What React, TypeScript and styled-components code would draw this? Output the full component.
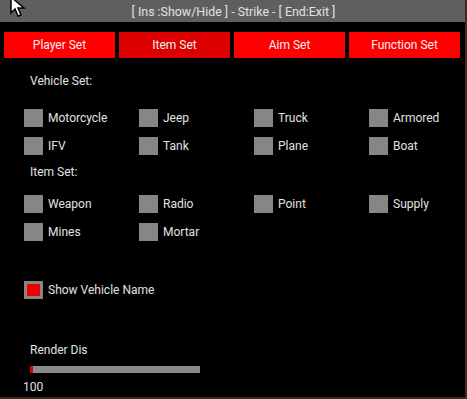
import React from 'react'
import styled, { createGlobalStyle } from 'styled-components'

const GlobalStyle = createGlobalStyle`
  html, body {
    margin: 0;
    padding: 0;
    background: #3b2a1d;
    font-family: Roboto, "Liberation Sans", sans-serif;
  }
`

const Window = styled.div`
  position: relative;
  width: 465px;
  height: 397px;
  background: #000;
  display: flex;
  flex-direction: column;
  overflow: hidden;
`

const TitleBar = styled.div`
  height: 22px;
  background: #5f5f5f;
  color: #e2e2e2;
  font-size: 12.4px;
  display: flex;
  align-items: center;
  justify-content: center;
  padding: 1px 0 0 2px;
  box-sizing: border-box;
`

const Tabs = styled.div`
  display: grid;
  grid-template-columns: repeat(4, 111px);
  column-gap: 4px;
  padding: 10px 5px 0 4px;
`

const Tab = styled.div<{ $active?: boolean }>`
  height: 26px;
  background: ${(p) => (p.$active ? '#dc0000' : '#ff0000')};
  color: #f2f2f2;
  font-size: 12px;
  display: flex;
  align-items: center;
  justify-content: center;
`

const Content = styled.div`
  display: flex;
  flex-direction: column;
  padding-left: 24px;
`

const SectionLabel = styled.div<{ $top: number }>`
  margin-top: ${(p) => p.$top}px;
  padding-left: 6px;
  color: #e2e2e2;
  font-size: 12px;
  line-height: 14px;
  height: 14px;
`

const Grid = styled.div<{ $top: number }>`
  margin-top: ${(p) => p.$top}px;
  display: grid;
  grid-template-columns: repeat(4, 115px);
  grid-auto-rows: 18px;
  row-gap: 10px;
`

const Option = styled.div<{ $top?: number }>`
  margin-top: ${(p) => p.$top ?? 0}px;
  display: flex;
  align-items: center;
  gap: 5px;
  height: 18px;
  color: #e2e2e2;
  font-size: 12px;
  padding-top: 1px;
`

const Box = styled.div<{ $checked?: boolean }>`
  width: 19px;
  height: 18px;
  margin-top: -1px;
  box-sizing: border-box;
  background: ${(p) => (p.$checked ? '#f00000' : '#868686')};
  border: ${(p) => (p.$checked ? '3px solid #868686' : 'none')};
  flex: none;
`

const Slider = styled.div`
  margin: 9px 0 0 6px;
  width: 170px;
  height: 7px;
  background: #8a8a8a;
  display: flex;
`

const SliderFill = styled.div`
  background: #e00000;
  height: 100%;
`

const Value = styled.div`
  margin-top: 7px;
  margin-left: -1px;
  color: #e2e2e2;
  font-size: 12px;
  line-height: 14px;
`

const Cursor = styled.svg`
  position: absolute;
  left: 9px;
  top: -4px;
`

const vehicles = ['Motorcycle', 'Jeep', 'Truck', 'Armored', 'IFV', 'Tank', 'Plane', 'Boat']
const items = ['Weapon', 'Radio', 'Point', 'Supply', 'Mines', 'Mortar']

const Check: React.FC<{ label: string; checked?: boolean; top?: number }> = ({ label, checked, top }) => (
  <Option $top={top}>
    <Box $checked={checked} />
    {label}
  </Option>
)

export default function App() {
  return (
    <>
      <GlobalStyle />
      <Window>
        <TitleBar>[ Ins :Show/Hide ] - Strike - [ End:Exit ]</TitleBar>
        <Tabs>
          <Tab>Player Set</Tab>
          <Tab $active>Item Set</Tab>
          <Tab>Aim Set</Tab>
          <Tab>Function Set</Tab>
        </Tabs>
        <Content>
          <SectionLabel $top={16}>Vehicle Set:</SectionLabel>
          <Grid $top={20}>
            {vehicles.map((v) => (
              <Check key={v} label={v} />
            ))}
          </Grid>
          <SectionLabel $top={11}>Item Set:</SectionLabel>
          <Grid $top={15}>
            {items.map((v) => (
              <Check key={v} label={v} />
            ))}
          </Grid>
          <Check label="Show Vehicle Name" checked top={40} />
          <SectionLabel $top={44}>Render Dis</SectionLabel>
          <Slider>
            <SliderFill style={{ width: `${(3 / 170) * 100}%` }} />
          </Slider>
          <Value>100</Value>
        </Content>
        <Cursor width="18" height="22" viewBox="0 0 18 22">
          <path d="M2 1 L2 17 L6 13 L9 20 L12 19 L9 12 L15 12 Z" fill="#fff" stroke="#000" strokeWidth="1.5" strokeLinejoin="miter" />
        </Cursor>
      </Window>
    </>
  )
}
